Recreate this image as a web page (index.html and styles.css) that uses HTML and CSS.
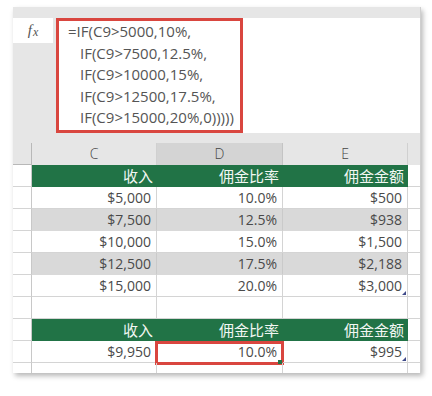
FILE: index.html
```html
<!DOCTYPE html>
<html lang="zh">
<head>
<meta charset="utf-8">
<link rel="stylesheet" href="styles.css">
</head>
<body>
<div class="window">
  <div class="topstrip"></div>
  <div class="fbar">
    <div class="fxcol"><div class="fxbox"><span class="fx-f">f</span><span class="fx-x">x</span></div></div>
    <div class="formula-area">
      <div class="formula">
        <div class="fl">=IF(C9&gt;5000,10%,</div>
        <div class="fl ind">IF(C9&gt;7500,12.5%,</div>
        <div class="fl ind">IF(C9&gt;10000,15%,</div>
        <div class="fl ind">IF(C9&gt;12500,17.5%,</div>
        <div class="fl ind">IF(C9&gt;15000,20%,0)))))</div>
      </div>
    </div>
  </div>
  <div class="gap"></div>
  <div class="sheet">
    <div class="rh corner"></div><div class="ch">C</div><div class="ch sel">D</div><div class="ch">E</div><div class="ch last"></div>

    <div class="rh"></div><div class="c g">收入</div><div class="c g">佣金比率</div><div class="c g">佣金金额</div><div class="c x"></div>
    <div class="rh"></div><div class="c">$5,000</div><div class="c">10.0%</div><div class="c">$500</div><div class="c x"></div>
    <div class="rh"></div><div class="c s">$7,500</div><div class="c s">12.5%</div><div class="c s">$938</div><div class="c x"></div>
    <div class="rh"></div><div class="c">$10,000</div><div class="c">15.0%</div><div class="c">$1,500</div><div class="c x"></div>
    <div class="rh"></div><div class="c s">$12,500</div><div class="c s">17.5%</div><div class="c s">$2,188</div><div class="c x"></div>
    <div class="rh"></div><div class="c">$15,000</div><div class="c">20.0%</div><div class="c tri">$3,000</div><div class="c x"></div>
    <div class="rh"></div><div class="c"></div><div class="c"></div><div class="c"></div><div class="c x"></div>
    <div class="rh"></div><div class="c g">收入</div><div class="c g">佣金比率</div><div class="c g">佣金金额</div><div class="c x"></div>
    <div class="rh"></div><div class="c">$9,950</div><div class="c active">10.0%</div><div class="c tri">$995</div><div class="c x"></div>
    <div class="rh short"></div><div class="c short"></div><div class="c short"></div><div class="c short"></div><div class="c x short"></div>
  </div>
</div>
</body>
</html>
```

FILE: styles.css
```css
* { box-sizing: border-box; }
html, body { margin: 0; padding: 0; background: #fff; }
body {
  width: 432px;
  height: 396px;
  overflow: hidden;
  font-family: "Open Sans", "Noto Sans CJK SC", sans-serif;
  color: #4a4a4a;
}
.window {
  margin: 7px 0 0 13px;
  width: 408px;
  height: 366px;
  background: #e6e6e6;
  box-shadow: 2px 3px 5px rgba(0,0,0,0.28);
  display: flex;
  flex-direction: column;
  border-right: 1px solid #cfcfcf;
}
.topstrip { height: 11px; background: #e6e6e6; flex: none; }
.fbar { height: 115px; display: flex; flex: none; }
.fxcol { width: 43px; flex: none; }
.fxbox {
  width: 40px;
  height: 25px;
  background: #fff;
  display: flex;
  align-items: center;
  justify-content: center;
  font-family: "Liberation Serif", serif;
  font-style: italic;
  color: #555;
}
.fx-f { font-size: 15px; }
.fx-x { font-size: 12px; margin-left: 1px; margin-top: 3px; }
.formula-area { flex: 1; background: #fff; }
.formula {
  width: 187px;
  height: 115px;
  border: 3px solid #d9463f;
  padding: 0 0 0 9px;
  font-size: 15px;
  line-height: 21.5px;
  color: #555;
  white-space: nowrap;
}
.fl.ind { padding-left: 12px; }
.gap { height: 10px; flex: none; background: #e6e6e6; }
.sheet {
  flex: 1;
  display: grid;
  grid-template-columns: 19px 125px 126px 125px 12px;
  grid-template-rows: 22px repeat(9, 22px) 10px;
  background: #fff;
}
.rh {
  background: #fff;
  border-bottom: 1px solid #d4d4d4;
  border-right: 1px solid #c8c8c8;
}
.rh.corner {
  background: #e6e6e6;
  border-bottom: 1px solid #b8b8b8;
  border-right: 1px solid #b8b8b8;
}
.ch {
  background: #e6e6e6;
  border-right: 1px solid #d0d0d0;
  text-align: center;
  font-size: 14px;
  line-height: 22px;
  color: #444;
  font-weight: 300;
}
.ch.sel { background: #d4d4d4; border-right-color: #c4c4c4; }
.ch.last { background: #e6e6e6; border-right: none; }
.c {
  position: relative;
  border-right: 1px solid #d4d4d4;
  border-bottom: 1px solid #d4d4d4;
  text-align: right;
  padding-right: 5px;
  font-size: 14px;
  line-height: 21px;
  color: #4a4a4a;
  white-space: nowrap;
}
.c.x { border-right: none; padding: 0; }
.c.s { background: #d9d9d9; border-right-color: #cacaca; border-bottom-color: #d9d9d9; }
.c.g {
  background: #217346;
  color: #f2f7f3;
  border-right: none;
  border-bottom: none;
  font-size: 15px;
  font-family: "Noto Sans CJK SC", sans-serif;
  line-height: 22px;
  padding-right: 4px;
}
.short { border-bottom: none; }
.c.tri::after {
  content: "";
  position: absolute;
  right: 1px;
  bottom: 1px;
  width: 0;
  height: 0;
  border-left: 4px solid transparent;
  border-bottom: 4px solid #3f4a8a;
}
.c.active::after {
  content: "";
  position: absolute;
  left: -2px;
  right: -2px;
  top: 0;
  bottom: -3px;
  border: 3px solid #d9463f;
}
.c.active::before {
  content: "";
  position: absolute;
  right: 0;
  bottom: -2px;
  width: 4px;
  height: 4px;
  background: #217346;
  z-index: 2;
}
```
